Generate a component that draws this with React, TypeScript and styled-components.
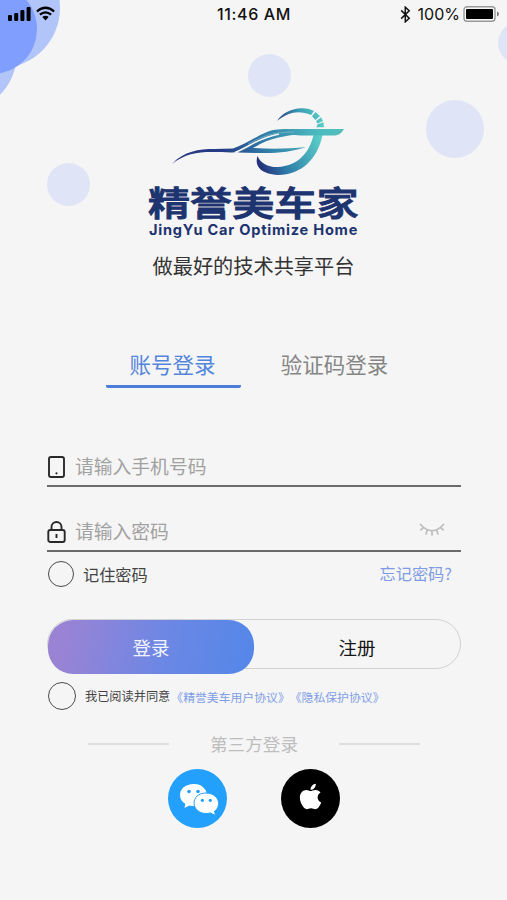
import React from 'react';
import styled, { createGlobalStyle } from 'styled-components';
import { FaApple } from 'react-icons/fa';

const GlobalStyle = createGlobalStyle`
  * { box-sizing: border-box; }
  body { margin: 0; background: #f5f5f5; }
  button, input { font: inherit; border: 0; background: none; padding: 0; margin: 0; outline: none; }
`;

const Screen = styled.div`
  position: relative;
  width: 507px;
  height: 900px;
  overflow: hidden;
  background: #f5f5f5;
  font-family: 'Noto Sans CJK SC', sans-serif;
  display: flex;
  flex-direction: column;
`;

const Bubble = styled.i<{ $x: number; $y: number; $r: number; $color?: string }>`
  position: absolute;
  left: ${p => p.$x - p.$r}px;
  top: ${p => p.$y - p.$r}px;
  width: ${p => p.$r * 2}px;
  height: ${p => p.$r * 2}px;
  border-radius: 50%;
  background: ${p => p.$color ?? '#dfe4f6'};
`;

const StatusBar = styled.header`
  position: relative;
  height: 28px;
  flex: none;
  display: grid;
  grid-template-columns: 1fr auto 1fr;
  align-items: center;
  padding: 0 7px 0 8px;
  font: 500 16px/28px Inter, sans-serif;
  color: #111;
`;

const StatusGroup = styled.div<{ $end?: boolean }>`
  display: flex;
  align-items: center;
  height: 28px;
  justify-content: ${p => (p.$end ? 'flex-end' : 'flex-start')};
  gap: 5px;
`;

const Time = styled.span`
  letter-spacing: 0.65px;
`;

const Percent = styled.span`
  font-weight: 400;
  font-size: 16px;
  margin: 0 -2px 0 2px;
`;

const Brand = styled.section`
  position: relative;
  height: 254px;
  flex: none;
  padding-top: 72px;
  display: flex;
  flex-direction: column;
  align-items: center;
`;

const Emblem = styled.svg`
  flex: none;
  display: block;
`;

const BrandName = styled.h1`
  margin: 3px 0 0;
  height: 37px;
  font-size: 34.5px;
  line-height: 37px;
  font-weight: 500;
  color: #1d3470;
  white-space: nowrap;
  transform: scaleX(1.22);
  -webkit-text-stroke: 1px #1d3470;
`;

const BrandLatin = styled.p`
  margin: 2px 0 0;
  height: 17px;
  font: 700 14.6px/17px Inter, sans-serif;
  letter-spacing: 0.75px;
  color: #1d3470;
  white-space: nowrap;
`;

const Slogan = styled.p`
  margin: 12px 0 0;
  font-size: 20.2px;
  line-height: 30px;
  color: #333;
`;

const Tabs = styled.nav`
  flex: none;
  display: flex;
  height: 40px;
  margin: 67px 0 0 106px;
  gap: 27px;
`;

const Tab = styled.button<{ $active?: boolean }>`
  width: 135px;
  height: 39px;
  font-size: 21.5px;
  line-height: 30px;
  padding: 0 2px 8px 0;
  color: ${p => (p.$active ? '#5485dc' : '#858585')};
  border-bottom: 3px solid ${p => (p.$active ? '#4b7dd9' : 'transparent')};
  border-radius: 2px;
  white-space: nowrap;
`;

const Form = styled.form`
  flex: none;
  margin: 57px 46px 0 47px;
`;

const Field = styled.label<{ $first?: boolean }>`
  display: flex;
  align-items: center;
  width: 414px;
  height: ${p => (p.$first ? 41 : 65)}px;
  padding-top: ${p => (p.$first ? 1 : 25)}px;
  border-bottom: 2px solid #6b6b6b;
`;

const FieldIcon = styled.svg`
  width: 19px;
  height: 24px;
  flex: none;
  margin-top: 2px;
`;

const Input = styled.input`
  flex: 1;
  min-width: 0;
  height: 36px;
  margin: -2px 0 0 9px;
  font-size: 18.8px;
  &::placeholder { color: #a1a1a1; opacity: 1; }
`;

const EyeIcon = styled.svg`
  width: 26px;
  height: 16px;
  margin: -3px 16px 0 0;
  flex: none;
`;

const RememberRow = styled.div`
  display: flex;
  align-items: center;
  height: 47px;
  font-size: 16.2px;
  color: #444;
`;

const Radio = styled.span<{ $size: number; $lift?: number }>`
  flex: none;
  width: ${p => p.$size}px;
  height: ${p => p.$size}px;
  border-radius: 50%;
  border: 1.6px solid #4a4a4a;
  margin: ${p => -(p.$lift ?? 0)}px 0 0 0.5px;
`;

const RememberText = styled.span`
  margin: -4px 0 0 9.5px;
  line-height: 24px;
`;

const Forgot = styled.a`
  margin: -6px 9px 0 auto;
  color: #7f9ce2;
`;

const Actions = styled.div`
  display: flex;
  width: 414px;
  height: 50px;
  margin-top: 20px;
  border: 1.5px solid #d2d2d3;
  border-radius: 25px;
`;

const LoginButton = styled.button`
  flex: none;
  width: 206px;
  height: 54px;
  margin: 0;
  border-radius: 25px;
  background: linear-gradient(100deg, #9a83d4 8%, #6d87e4 55%, #5687e8 95%);
  color: #f1f4ff;
  font-size: 18.5px;
`;

const RegisterButton = styled.button`
  flex: 1;
  font-size: 18.5px;
  padding-top: 6px;
  color: #151515;
`;

const Agreement = styled.div`
  display: flex;
  align-items: center;
  height: 28px;
  margin-top: 13px;
  font-size: 12.2px;
  color: #444;
  white-space: nowrap;
`;

const AgreementText = styled.span`
  margin-left: 9.5px;
  line-height: 20px;
  text-spacing-trim: space-all;
`;

const Policies = styled.span`
  position: relative;
  top: 1px;
  margin-left: 1px;
  font-size: 11.85px;
`;

const Policy = styled.a`
  color: #809ee6;
`;

const Divider = styled.div`
  flex: none;
  display: flex;
  align-items: center;
  justify-content: space-between;
  width: 332px;
  height: 28px;
  margin: 20px 0 0 88px;
  color: #bdbdbd;
  font-size: 17.6px;
  line-height: 28px;
  &::before, &::after {
    content: '';
    width: 81px;
    height: 2px;
    background: #dedede;
  }
`;

const Socials = styled.div`
  flex: none;
  display: flex;
  gap: 54px;
  margin: 11px 0 0 168px;
`;

const SocialButton = styled.button<{ $bg: string }>`
  width: 59px;
  height: 59px;
  border-radius: 50%;
  background: ${p => p.$bg};
  color: #fff;
  display: flex;
  align-items: center;
  justify-content: center;
`;

const AppleMark = styled(FaApple)`
  width: 29px;
  height: 29px;
  margin-top: -4px;
`;

const Signal = () => (
  <svg width="23" height="16" viewBox="0 0 23 16">
    <rect x="0" y="9" width="4" height="6" rx="1" />
    <rect x="6.2" y="7" width="4" height="8" rx="1" />
    <rect x="12.4" y="4" width="4" height="11" rx="1" />
    <rect x="18.6" y="1" width="4" height="14" rx="1" />
  </svg>
);

const Wifi = () => (
  <svg width="19" height="16" viewBox="0 0 19 16" fill="none" stroke="#000" strokeWidth="2.3">
    <path d="M.9 5.5Q9.5-1.9 18.1 5.5" />
    <path d="M3.9 8.7Q9.5 4 15.1 8.7" />
    <path d="M6.3 11.1Q9.5 8.5 12.7 11.1L9.5 14.4Z" fill="#000" stroke="none" />
  </svg>
);

const Bluetooth = () => (
  <svg width="11" height="17" viewBox="0 0 11 17" fill="none" stroke="#111" strokeWidth="1.5">
    <path d="m1.2 4.4 8 7.8-3.9 3.6V1.2l3.9 3.6-8 7.8" />
  </svg>
);

const Battery = () => (
  <svg width="37" height="16" viewBox="0 0 37 16">
    <rect x="1" y=".8" width="31" height="14.4" rx="3" fill="none" stroke="#999" strokeWidth="1.4" />
    <rect x="3" y="3" width="27" height="10" rx="1" />
    <path d="M34 5.5q2 .8 2 2.5t-2 2.5z" fill="#777" />
  </svg>
);

const Logo = () => (
  <Emblem width="190" height="80" viewBox="-1 0 190 80">
    <defs>
      <linearGradient id="body" gradientUnits="userSpaceOnUse" x1="12" y1="60" x2="184" y2="30">
        <stop offset="0" stopColor="#293782" />
        <stop offset=".3" stopColor="#243d86" />
        <stop offset=".55" stopColor="#317fa8" />
        <stop offset=".85" stopColor="#4cbbc0" />
        <stop offset="1" stopColor="#53beb9" />
      </linearGradient>
      <linearGradient id="ring" gradientUnits="userSpaceOnUse" x1="98" y1="65" x2="160" y2="38">
        <stop offset="0" stopColor="#252c79" />
        <stop offset=".35" stopColor="#2c7ba8" />
        <stop offset="1" stopColor="#5acdc8" />
      </linearGradient>
      <linearGradient id="arc" gradientUnits="userSpaceOnUse" x1="117" y1="20" x2="160" y2="17">
        <stop offset="0" stopColor="#283d88" />
        <stop offset=".55" stopColor="#3a9fb3" />
        <stop offset="1" stopColor="#56c8c4" />
      </linearGradient>
    </defs>
    <path fill="url(#arc)" d="M117 21C123 11 137 6 149 9L154 11 151 15C139 10 128 12 117 21Z" />
    <path fill="url(#arc)" d="M155.5 12 160 16 155.5 20 152 16.2ZM161 17.3 163 21 157.5 23.5 156 21.2ZM157.5 24.3 163.4 22.2 164 27.2H156.3Z" />
    <path fill="url(#ring)" d="M97.500 56C101 64 109 67.500 118 67 137 66 149 54 153.500 35H162.500C158 58 142 75 118 75 102 74 94 67 97.500 56Z" />
    <path fill="url(#body)" d="M12 64C24 51 39 49 54 49L73 48.5C86 44 95 37 107 32 114 29 120 29 132 29H184C181 34 178 35.500 173 35.500H140C123 34 112 36 101 41L80 52C72 53 61 52 52 52 36 52 25 54 12 64Z" />
    <path fill="url(#body)" d="M78 52.500C92 47 102 35 124 33.500H146C123 36 109 38 93 48 110 49 129 49 146 47 132 52 116 53.500 99 53Z" />
    <path fill="none" stroke="#f5f5f5" strokeWidth="1.6" d="M75 52.5C91 46 98 38 119 34" />
    <path fill="none" stroke="#8fc3d2" strokeWidth=".6" d="M88 44C103 36 113 32 134 32" />
  </Emblem>
);

const PhoneIcon = () => (
  <FieldIcon viewBox="0 0 19 24" fill="none" stroke="#292929" strokeWidth="1.9">
    <rect x="2" y="2" width="15" height="20" rx="2" />
    <circle cx="9.5" cy="18.3" r="1.1" fill="#292929" stroke="none" />
  </FieldIcon>
);

const LockIcon = () => (
  <FieldIcon viewBox="0 0 19 24" fill="none" stroke="#292929" strokeWidth="1.9">
    <rect x="1.3" y="10" width="16.4" height="12" rx="2" />
    <path d="M4.5 10V7a5 5 0 0 1 10 0v3M9.5 14v4" />
  </FieldIcon>
);

const ClosedEye = () => (
  <EyeIcon viewBox="0 0 26 16" fill="none" stroke="#bdbdbd" strokeWidth="1.7" strokeLinecap="round">
    <path d="M1.5 2.5Q13 15 24.5 2.5M4.5 5.5 1.8 7.8M8.2 8.4 7 12M13 9.2V13M17.8 8.4 19 12M21.5 5.5l2.7 2.3" />
  </EyeIcon>
);

const WeChat = () => (
  <svg width="42" height="36" viewBox="0 0 42 36">
    <path fill="#fff" d="M17 3C8 3 3 8 3 14.2c0 3.8 2.1 6.5 5.3 8.6L7.5 27l5-2.5c2 .6 4 .7 6 .5C31 24 31 11 28 8.5 25.5 4.8 22 3 17 3Z" />
    <path fill="#fff" stroke="#23a0fc" strokeWidth="1" d="M29 12C21 12 17 17 17 22.2S22 32.5 29 32.5c1.6 0 3-.2 4.3-.6L38.5 34.5l-1-4.2c2.9-1.8 4.1-4.8 4.1-8 0-5.3-5-10.3-12.6-10.3Z" />
    <g fill="#23a0fc">
      <circle cx="12" cy="10.5" r="1.8" />
      <circle cx="21" cy="10.5" r="1.8" />
      <circle cx="25.4" cy="19.3" r="1.6" />
      <circle cx="33.3" cy="19.3" r="1.6" />
    </g>
  </svg>
);

export default function App() {
  return (
    <>
      <GlobalStyle />
      <Screen>
        <Bubble $x={-43} $y={53} $r={60} $color="#b2c5f9" />
        <Bubble $x={0} $y={8} $r={60} $color="#b2c5f9" />
        <Bubble $x={-8} $y={29} $r={45} $color="#7f9efe" />
        <Bubble $x={269} $y={75} $r={21.5} />
        <Bubble $x={455} $y={129} $r={29} />
        <Bubble $x={68} $y={184} $r={21.5} />
        <Bubble $x={519} $y={43} $r={21} />
        <StatusBar>
          <StatusGroup><Signal /><Wifi /></StatusGroup>
          <Time>11:46 AM</Time>
          <StatusGroup $end><Bluetooth /><Percent>100%</Percent><Battery /></StatusGroup>
        </StatusBar>
        <Brand>
          <Logo />
          <BrandName>精誉美车家</BrandName>
          <BrandLatin>JingYu Car Optimize Home</BrandLatin>
          <Slogan>做最好的技术共享平台</Slogan>
        </Brand>
        <Tabs>
          <Tab $active>账号登录</Tab>
          <Tab>验证码登录</Tab>
        </Tabs>
        <Form>
          <Field $first><PhoneIcon /><Input placeholder="请输入手机号码" /></Field>
          <Field><LockIcon /><Input type="password" placeholder="请输入密码" /><ClosedEye /></Field>
          <RememberRow>
            <Radio $size={26} $lift={3} />
            <RememberText>记住密码</RememberText>
            <Forgot>忘记密码?</Forgot>
          </RememberRow>
          <Actions>
            <LoginButton type="button">登录</LoginButton>
            <RegisterButton type="button">注册</RegisterButton>
          </Actions>
          <Agreement>
            <Radio $size={28} />
            <AgreementText>我已阅读并同意<Policies><Policy>《精誉美车用户协议》</Policy><Policy>《隐私保护协议》</Policy></Policies></AgreementText>
          </Agreement>
        </Form>
        <Divider>第三方登录</Divider>
        <Socials>
          <SocialButton $bg="#23a0fc" aria-label="微信"><WeChat /></SocialButton>
          <SocialButton $bg="#000" aria-label="Apple"><AppleMark /></SocialButton>
        </Socials>
      </Screen>
    </>
  );
}
